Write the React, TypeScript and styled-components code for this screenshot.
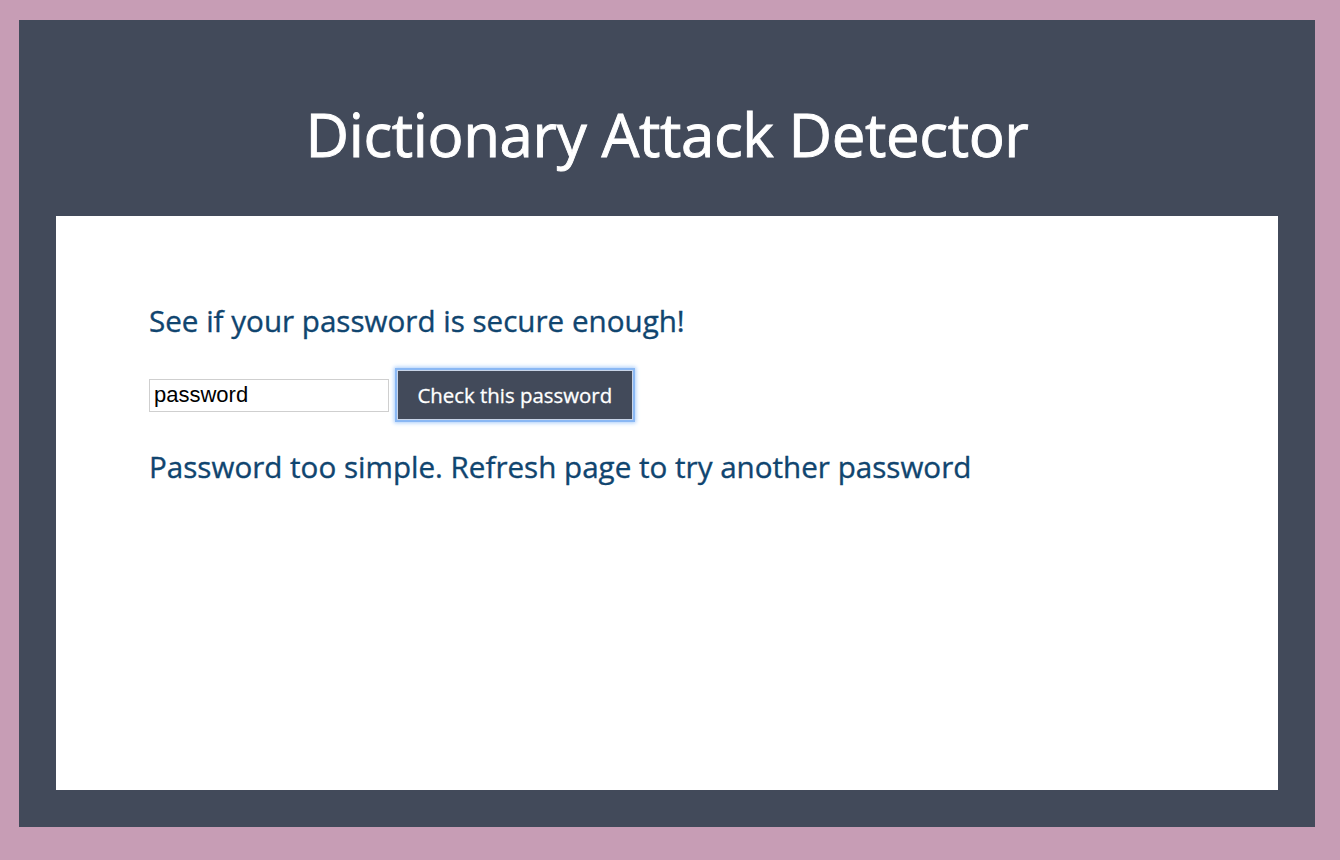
import React, { useState } from 'react';
import styled, { createGlobalStyle } from 'styled-components';

const GlobalStyle = createGlobalStyle`
  html, body {
    margin: 0;
    padding: 0;
    background: #c79db5;
  }
  body {
    font-family: "Open Sans", "Liberation Sans", sans-serif;
  }
`;

const Page = styled.div`
  padding: 20px 25px 33px 19px;
  box-sizing: border-box;
  width: 1340px;
  height: 860px;
`;

const Frame = styled.div`
  background: #424a5a;
  height: 100%;
  padding: 0 37px 37px 37px;
  box-sizing: border-box;
  display: flex;
  flex-direction: column;
`;

const Header = styled.h1`
  margin: 0;
  height: 196px;
  display: flex;
  align-items: center;
  justify-content: center;
  color: #ffffff;
  font-size: 60px;
  font-weight: 400;
  letter-spacing: -0.4px;
  -webkit-text-stroke: 0.9px #ffffff;
  padding-top: 32px;
  box-sizing: border-box;
`;

const Card = styled.main`
  flex: 1;
  background: #ffffff;
  padding: 86px 93px;
`;

const Lead = styled.h2`
  margin: 0;
  color: #10456f;
  font-size: 29.6px;
  font-weight: 400;
  line-height: 38px;
  -webkit-text-stroke: 0.35px #10456f;
`;

const Form = styled.form`
  display: flex;
  align-items: center;
  gap: 8px;
  margin-top: 30px;
`;

const Field = styled.input`
  width: 240px;
  height: 33px;
  box-sizing: border-box;
  border: 1px solid #cfcfcf;
  padding: 0 4px;
  font-family: "Liberation Sans", Arial, sans-serif;
  font-size: 22px;
  color: #000;
  outline: none;
`;

const Submit = styled.button`
  height: 50px;
  padding: 0 19.5px;
  background: #424a5a;
  color: #ffffff;
  font-family: "Open Sans", "Liberation Sans", sans-serif;
  font-size: 20.4px;
  -webkit-text-stroke: 0.3px #ffffff;
  border: 1px solid #c8d4e8;
  box-shadow: 0 0 0 2px #8ab8f4, 0 0 4px 3px #a9cdfa;
  cursor: pointer;
`;

const Result = styled.p`
  margin: 28px 0 0;
  color: #10456f;
  font-size: 29.6px;
  line-height: 38px;
  -webkit-text-stroke: 0.35px #10456f;
`;

export default function App() {
  const [value, setValue] = useState('password');

  return (
    <>
      <GlobalStyle />
      <Page>
        <Frame>
          <Header>Dictionary Attack Detector</Header>
          <Card>
            <Lead>See if your password is secure enough!</Lead>
            <Form onSubmit={e => e.preventDefault()}>
              <Field value={value} onChange={e => setValue(e.target.value)} />
              <Submit type="submit">Check this password</Submit>
            </Form>
            <Result>Password too simple. Refresh page to try another password</Result>
          </Card>
        </Frame>
      </Page>
    </>
  );
}
